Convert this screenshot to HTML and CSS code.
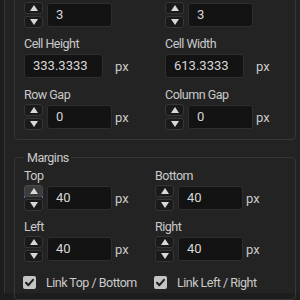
FILE: index.html
```html
<!DOCTYPE html>
<html>
<head>
<meta charset="utf-8">
<link rel="stylesheet" href="styles.css">
</head>
<body>
<div class="panel">
  <div class="group grid-group">
    <div class="cols cols-top">
      <div class="col">
        <div class="row">
          <div class="spinner"><div class="btn up"><span class="tri-up"></span></div><div class="btn down"><span class="tri-down"></span></div></div>
          <div class="input">3</div>
        </div>
        <div class="field">
          <div class="label">Cell Height</div>
          <div class="row">
            <div class="input wide">333.3333</div>
            <span class="unit unit-wide">px</span>
          </div>
        </div>
        <div class="field">
          <div class="label">Row Gap</div>
          <div class="row">
            <div class="spinner"><div class="btn up"><span class="tri-up"></span></div><div class="btn down"><span class="tri-down"></span></div></div>
            <div class="input">0</div>
            <span class="unit">px</span>
          </div>
        </div>
      </div>
      <div class="col">
        <div class="row">
          <div class="spinner"><div class="btn up"><span class="tri-up"></span></div><div class="btn down"><span class="tri-down"></span></div></div>
          <div class="input">3</div>
        </div>
        <div class="field">
          <div class="label">Cell Width</div>
          <div class="row">
            <div class="input wide">613.3333</div>
            <span class="unit unit-wide">px</span>
          </div>
        </div>
        <div class="field">
          <div class="label">Column Gap</div>
          <div class="row">
            <div class="spinner"><div class="btn up"><span class="tri-up"></span></div><div class="btn down"><span class="tri-down"></span></div></div>
            <div class="input">0</div>
            <span class="unit">px</span>
          </div>
        </div>
      </div>
    </div>
  </div>

  <fieldset class="group margins">
    <legend>Margins</legend>
    <div class="cols cols-margins">
      <div class="col">
        <div class="field">
          <div class="label">Top</div>
          <div class="row">
            <div class="spinner"><div class="btn up hover"><span class="tri-up"></span></div><div class="btn down"><span class="tri-down"></span></div></div>
            <div class="input">40</div>
            <span class="unit">px</span>
          </div>
        </div>
        <div class="field">
          <div class="label">Left</div>
          <div class="row">
            <div class="spinner"><div class="btn up"><span class="tri-up"></span></div><div class="btn down"><span class="tri-down"></span></div></div>
            <div class="input">40</div>
            <span class="unit">px</span>
          </div>
        </div>
        <div class="check-row">
          <span class="checkbox"><svg width="13" height="13" viewBox="0 0 13 13"><path d="M3 6.8 L5.4 9.2 L10 3.8" fill="none" stroke="#1e1e1e" stroke-width="2" stroke-linecap="round" stroke-linejoin="round"/></svg></span>
          <span class="check-label">Link Top / Bottom</span>
        </div>
      </div>
      <div class="col">
        <div class="field">
          <div class="label">Bottom</div>
          <div class="row">
            <div class="spinner"><div class="btn up"><span class="tri-up"></span></div><div class="btn down"><span class="tri-down"></span></div></div>
            <div class="input">40</div>
            <span class="unit">px</span>
          </div>
        </div>
        <div class="field">
          <div class="label">Right</div>
          <div class="row">
            <div class="spinner"><div class="btn up"><span class="tri-up"></span></div><div class="btn down"><span class="tri-down"></span></div></div>
            <div class="input">40</div>
            <span class="unit">px</span>
          </div>
        </div>
        <div class="check-row">
          <span class="checkbox"><svg width="13" height="13" viewBox="0 0 13 13"><path d="M3 6.8 L5.4 9.2 L10 3.8" fill="none" stroke="#1e1e1e" stroke-width="2" stroke-linecap="round" stroke-linejoin="round"/></svg></span>
          <span class="check-label">Link Left / Right</span>
        </div>
      </div>
    </div>
  </fieldset>
</div>
</body>
</html>
```

FILE: styles.css
```css
html, body {
  margin: 0;
  padding: 0;
  background: #1d1d1d;
  height: 300px;
  overflow: hidden;
}
body {
  font-family: Roboto, "Open Sans", sans-serif;
  font-size: 12.5px;
  letter-spacing: -0.5px;
  color: #cacaca;
}
.panel {
  margin-left: 4px;
  width: 282px;
  height: 300px;
  background: #232323;
  border-left: 1px solid #353540;
  border-right: 1px solid #353540;
  padding: 0 10px 0 9px;
  box-sizing: content-box;
}
.group {
  border: 1px solid #363636;
  border-radius: 4px;
  margin: 0;
  min-width: 0;
}
.grid-group {
  margin-top: -7px;
  padding: 8px 9px 9px 9px;
}
.margins {
  margin-top: 9px;
  padding: 1px 8px 4px 9px;
}
legend {
  padding: 0 3px;
  line-height: 17px;
  color: #cacaca;
}
.cols {
  display: grid;
}
.cols-top {
  grid-template-columns: 141px 1fr;
}
.cols-margins {
  grid-template-columns: 131px 1fr;
}
.col {
  display: flex;
  flex-direction: column;
  gap: 7px;
}
.label {
  line-height: 17px;
  margin-bottom: 1px;
}
.row {
  display: flex;
  align-items: center;
  height: 26px;
}
.spinner {
  display: flex;
  flex-direction: column;
  gap: 2px;
  width: 19px;
  margin-right: 4px;
}
.btn {
  height: 12px;
  box-sizing: border-box;
  border: 1px solid #363636;
  border-radius: 3px;
  background: #1a1a1a;
  display: flex;
  align-items: center;
  justify-content: center;
}
.btn.hover {
  position: relative;
  background: #3c3c3c;
  border-color: #4a4a4a;
}
.btn.hover::before,
.btn.hover::after {
  content: "";
  position: absolute;
  bottom: -2px;
  width: 1px;
  height: 2px;
  background: #3f7fd8;
}
.btn.hover::before {
  left: -1px;
}
.btn.hover::after {
  right: -1px;
}
.tri-up {
  width: 0;
  height: 0;
  border-left: 4px solid transparent;
  border-right: 4px solid transparent;
  border-bottom: 6px solid #d8d8d8;
}
.tri-down {
  width: 0;
  height: 0;
  border-left: 4px solid transparent;
  border-right: 4px solid transparent;
  border-top: 6px solid #d8d8d8;
}
.input {
  width: 65px;
  height: 24px;
  box-sizing: border-box;
  background: #131313;
  border: 1px solid #2e2e2e;
  border-radius: 3px;
  padding-left: 8px;
  line-height: 22px;
  color: #d6d6d6;
  font-family: "Liberation Sans Narrow", Roboto, sans-serif;
  font-size: 13px;
  letter-spacing: 0;
}
.input.wide {
  width: 79px;
}
.unit {
  margin-left: 3px;
  font-size: 13px;
  letter-spacing: 0;
}
.unit-wide {
  margin-left: 12px;
}
.check-row {
  display: flex;
  align-items: center;
  height: 26px;
}
.checkbox {
  width: 13px;
  height: 13px;
  box-sizing: border-box;
  background: #c4c4c4;
  border-radius: 2px;
  display: flex;
  margin-left: -1px;
}
.check-label {
  margin-left: 10px;
}
```
